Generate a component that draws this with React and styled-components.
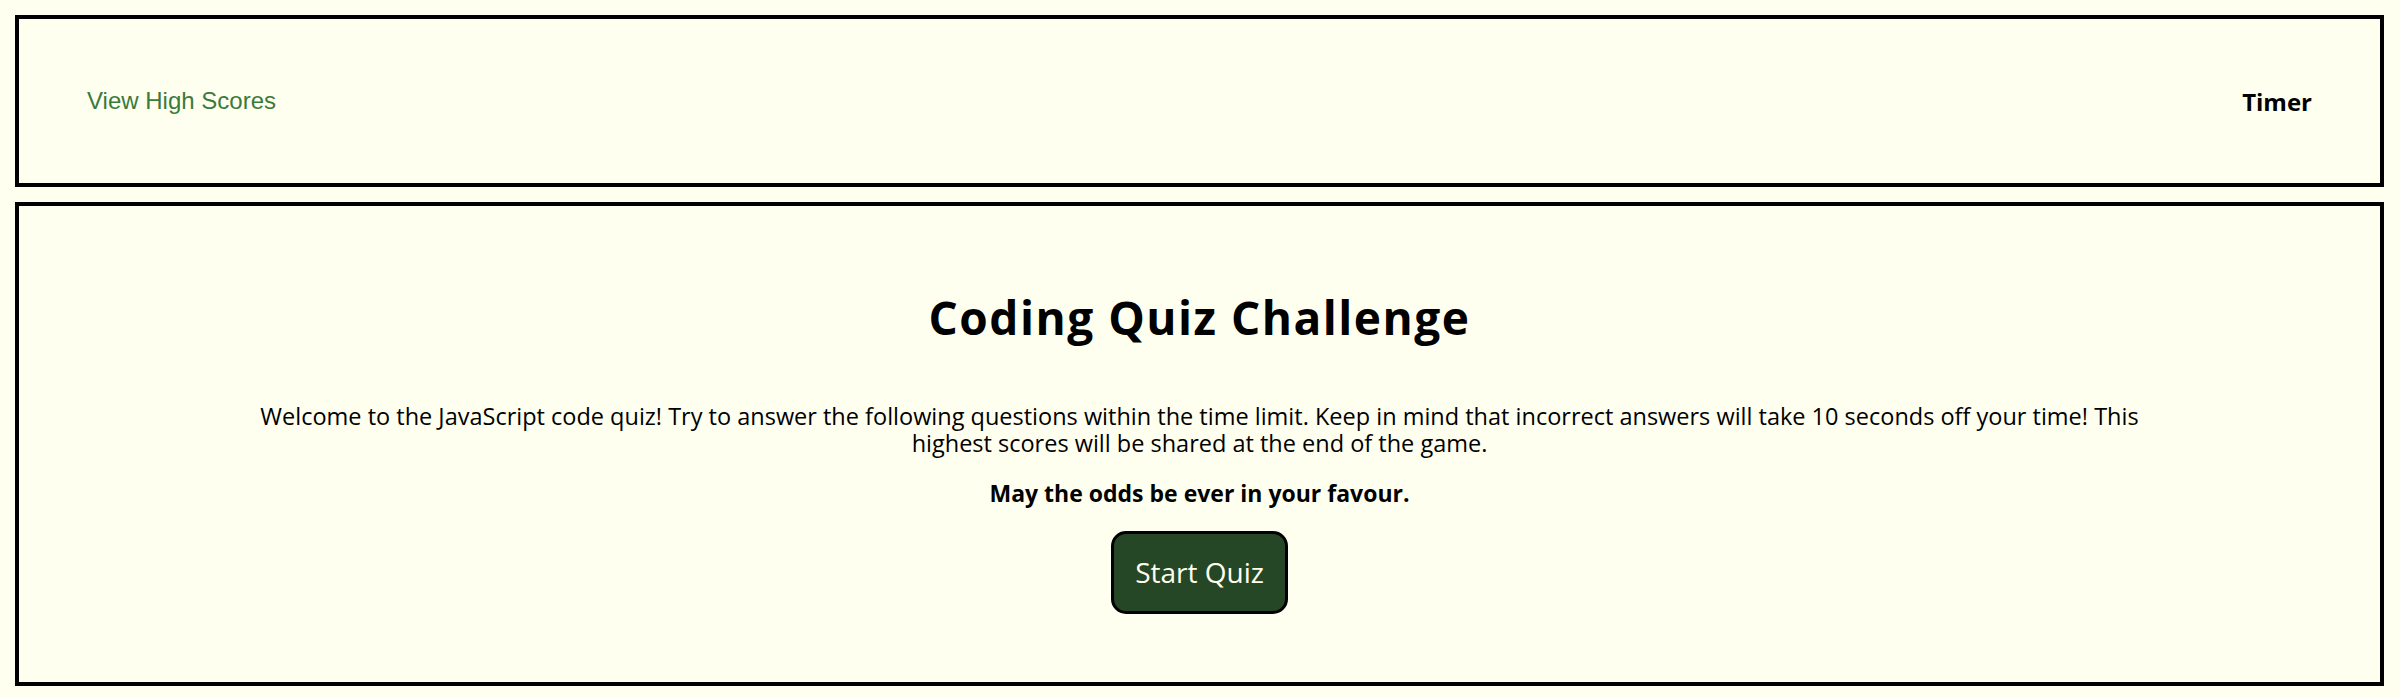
import styled, { createGlobalStyle } from 'styled-components'

const GlobalStyle = createGlobalStyle`
body {
  margin : 0;
  background-color : #fffff0;
  font-family : 'Open Sans', 'Noto Sans', sans-serif;
  color : #000;
}
`

const Page = styled.div`
display : flex;
flex-direction : column;
gap : 15px;
padding : 15px 16px 10px 15px;
`

const Header = styled.header`
height : 164px;
border : 4px solid #000;
display : flex;
align-items : center;
justify-content : space-between;
padding : 0 68px 0 68px;
`

const ScoresLink = styled.a`
font-family : 'Liberation Sans', Arial, sans-serif;
font-size : 24px;
color : #3a7a3c;
text-decoration : none;
cursor : pointer;
`

const Timer = styled.div`
font-size : 24px;
font-weight : 700;
`

const Main = styled.main`
border : 4px solid #000;
display : flex;
flex-direction : column;
align-items : center;
padding : 83px 0 68px;
text-align : center;
`

const Title = styled.h1`
margin : 0;
font-size : 46px;
line-height : 56px;
letter-spacing : 1.5px;
font-weight : 700;
`

const Intro = styled.p`
width : 80%;
margin : 58px 0 0;
font-size : 23.5px;
line-height : 27px;
`

const Motto = styled.p`
margin : 22px 0 0;
font-size : 23px;
line-height : 28px;
font-weight : 700;
`

const StartButton = styled.button`
margin-top : 24px;
padding : 21px 21px;
font-family : inherit;
font-size : 28px;
line-height : 35px;
color : #fffff0;
background-color : #264726;
border : 3px solid #000;
border-radius : 15px;
cursor : pointer;
`

export default function App() {
  return (
    <>
      <GlobalStyle />
      <Page>
        <Header>
          <ScoresLink>View High Scores</ScoresLink>
          <Timer>Timer</Timer>
        </Header>
        <Main>
          <Title>Coding Quiz Challenge</Title>
          <Intro>
            Welcome to the JavaScript code quiz! Try to answer the following questions within the time limit. Keep in mind that incorrect answers will take 10 seconds off your time! This highest scores will be shared at the end of the game.
          </Intro>
          <Motto>May the odds be ever in your favour.</Motto>
          <StartButton>Start Quiz</StartButton>
        </Main>
      </Page>
    </>
  )
}
